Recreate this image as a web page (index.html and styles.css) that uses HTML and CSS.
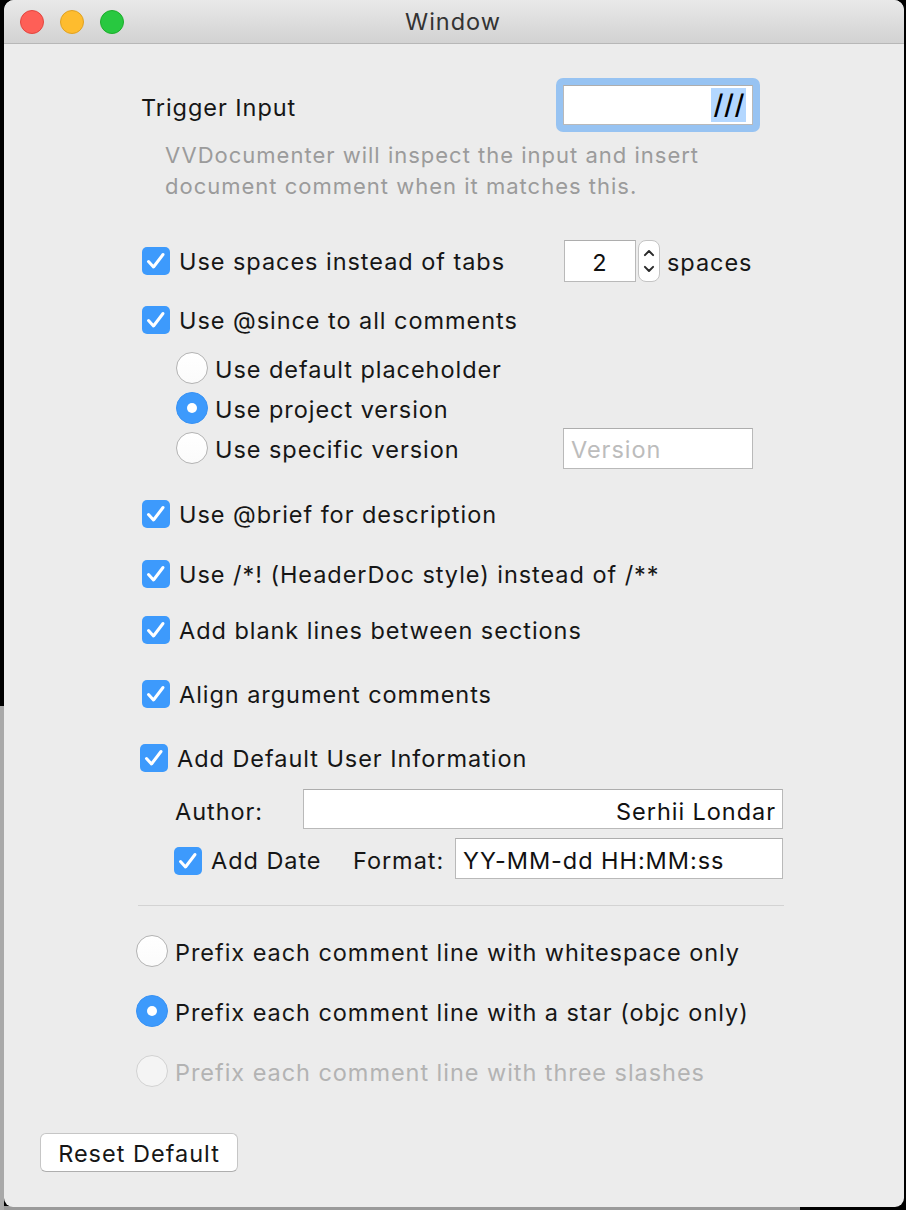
FILE: index.html
```html
<!DOCTYPE html>
<html>
<head>
<meta charset="utf-8">
<link rel="stylesheet" href="styles.css">
</head>
<body>
<div class="window">
  <div class="titlebar">
    <div class="lights">
      <span class="light red"></span>
      <span class="light yellow"></span>
      <span class="light green"></span>
    </div>
    <div class="title">Window</div>
  </div>
  <div class="content">
    <div class="form">
      <div class="row trigger-row">
        <div class="cell trigger-cell"><span class="label">Trigger Input</span></div>
        <div class="focus-ring"><div class="field trigger-field"><span class="sel">///</span></div></div>
      </div>
      <p class="desc">VVDocumenter will inspect the input and insert<br>document comment when it matches this.</p>

      <div class="row spaces-row">
        <div class="cell spaces-cell">
          <span class="check"><svg viewBox="0 0 28 28"><path d="M6.5 14.5 L11.5 20 L21 7.5"/></svg></span>
          <span class="label">Use spaces instead of tabs</span>
        </div>
        <div class="field num-field">2</div>
        <div class="stepper">
          <svg viewBox="0 0 22 42"><path d="M6.5 14.5 L11 10 L15.5 14.5"/><path d="M6.5 27.5 L11 32 L15.5 27.5"/></svg>
        </div>
        <span class="label unit">spaces</span>
      </div>

      <div class="row opt since-row">
        <span class="check"><svg viewBox="0 0 28 28"><path d="M6.5 14.5 L11.5 20 L21 7.5"/></svg></span>
        <span class="label">Use @since to all comments</span>
      </div>

      <div class="radios">
        <div class="row radio-row">
          <span class="radio"></span><span class="label">Use default placeholder</span>
        </div>
        <div class="row radio-row">
          <span class="radio on"></span><span class="label">Use project version</span>
        </div>
        <div class="row radio-row">
          <div class="cell version-cell"><span class="radio"></span><span class="label">Use specific version</span></div>
          <div class="field version-field"><span class="placeholder">Version</span></div>
        </div>
      </div>

      <div class="row opt brief-row">
        <span class="check"><svg viewBox="0 0 28 28"><path d="M6.5 14.5 L11.5 20 L21 7.5"/></svg></span>
        <span class="label">Use @brief for description</span>
      </div>
      <div class="row opt header-row">
        <span class="check"><svg viewBox="0 0 28 28"><path d="M6.5 14.5 L11.5 20 L21 7.5"/></svg></span>
        <span class="label">Use /*! (HeaderDoc style) instead of /**</span>
      </div>
      <div class="row opt blank-row">
        <span class="check"><svg viewBox="0 0 28 28"><path d="M6.5 14.5 L11.5 20 L21 7.5"/></svg></span>
        <span class="label">Add blank lines between sections</span>
      </div>
      <div class="row opt align-row">
        <span class="check"><svg viewBox="0 0 28 28"><path d="M6.5 14.5 L11.5 20 L21 7.5"/></svg></span>
        <span class="label">Align argument comments</span>
      </div>
      <div class="row opt user-row">
        <span class="check"><svg viewBox="0 0 28 28"><path d="M6.5 14.5 L11.5 20 L21 7.5"/></svg></span>
        <span class="label">Add Default User Information</span>
      </div>

      <div class="row author-row">
        <div class="cell author-cell"><span class="label">Author:</span></div>
        <div class="field author-field">Serhii Londar</div>
      </div>
      <div class="row date-row">
        <div class="cell date-cell">
          <span class="check"><svg viewBox="0 0 28 28"><path d="M6.5 14.5 L11.5 20 L21 7.5"/></svg></span>
          <span class="label">Add Date</span>
        </div>
        <div class="cell format-cell"><span class="label">Format:</span></div>
        <div class="field format-field">YY-MM-dd HH:MM:ss</div>
      </div>

      <div class="separator"></div>

      <div class="row prefix-row first">
        <span class="radio"></span><span class="label">Prefix each comment line with whitespace only</span>
      </div>
      <div class="row prefix-row">
        <span class="radio on"></span><span class="label">Prefix each comment line with a star (objc only)</span>
      </div>
      <div class="row prefix-row">
        <span class="radio disabled"></span><span class="label dim">Prefix each comment line with three slashes</span>
      </div>
    </div>
    <button class="btn">Reset Default</button>
  </div>
</div>
</body>
</html>
```

FILE: styles.css
```css
* { box-sizing: border-box; }
html, body { margin: 0; padding: 0; }
body {
  width: 906px;
  height: 1210px;
  overflow: hidden;
  background:
    linear-gradient(#a9a9a9, #a9a9a9) 0 706px / 4px 504px no-repeat,
    linear-gradient(#9a9a9a, #9a9a9a) 0 1206px / 800px 4px no-repeat,
    #000;
  font-family: "Inter", "Liberation Sans", sans-serif;
  color: #161616;
}
.window {
  margin-left: 4px;
  width: 900px;
  height: 1207px;
  background: #ececec;
  border-radius: 10px 10px 9px 9px;
  overflow: hidden;
}
.titlebar {
  position: relative;
  height: 44px;
  background: linear-gradient(to bottom, #e9e9e9, #d2d2d2);
  border-bottom: 1px solid #b7b7b7;
  display: flex;
  align-items: center;
  justify-content: center;
}
.lights {
  position: absolute;
  left: 16px;
  top: 10px;
  display: flex;
  gap: 16px;
}
.light {
  width: 24px;
  height: 24px;
  border-radius: 50%;
  display: block;
}
.red { background: #fe5f57; border: 1px solid #e2463f; }
.yellow { background: #febc2e; border: 1px solid #dfa123; }
.green { background: #28c840; border: 1px solid #1dad2b; }
.title {
  font-size: 23.5px;
  color: #333;
  letter-spacing: 1px;
  padding-right: 2px;
}
.content {
  padding-top: 34px;
}
.form {
  margin-left: 132px;
  width: 648px;
}
.row {
  display: flex;
  align-items: center;
}
.cell { display: flex; align-items: center; flex: none; }
.label {
  font-size: 23.5px;
  letter-spacing: 0.95px;
  white-space: nowrap;
}
.trigger-row { height: 54px; }
.trigger-cell { width: 420px; padding-left: 5px; padding-top: 4px; }
.focus-ring {
  width: 204px;
  height: 54px;
  border-radius: 7px;
  background: #97c3f2;
  padding: 7px;
}
.field {
  background: #fff;
  border: 1px solid #b9b9b9;
  border-top-color: #adadad;
  font-size: 23.5px;
  letter-spacing: 0.95px;
  color: #111;
  display: flex;
  align-items: center;
}
.trigger-field {
  height: 40px;
  justify-content: flex-end;
  padding-right: 6px;
}
.sel {
  background: #b3d7ff;
  height: 34px;
  line-height: 34px;
  padding: 0 1px 0 3px;
  font-size: 27px;
  font-weight: 500;
  color: #000;
  letter-spacing: 0.5px;
}
.desc {
  margin: 8px 0 0 29px;
  font-size: 22px;
  line-height: 31px;
  letter-spacing: 1px;
  color: #9b9b9b;
}
.check {
  width: 28px;
  height: 28px;
  border-radius: 5px;
  background: #3d9afc;
  flex: none;
  display: block;
}
.check svg { width: 28px; height: 28px; display: block; }
.check path { fill: none; stroke: #fff; stroke-width: 3; stroke-linecap: round; stroke-linejoin: round; }
.check + .label { margin-left: 9px; }
.spaces-row { margin-top: 38px; height: 42px; }
.spaces-cell { width: 428px; padding-left: 6px; }
.num-field {
  width: 72px;
  height: 42px;
  justify-content: center;
  padding-top: 3px;
}
.stepper {
  width: 22px;
  height: 42px;
  margin-left: 2px;
  background: #fff;
  border: 1px solid #c4c4c4;
  border-radius: 8px;
  flex: none;
}
.stepper svg { width: 20px; height: 40px; display: block; }
.stepper path { fill: none; stroke: #2a2a2a; stroke-width: 2.2; stroke-linecap: round; stroke-linejoin: round; }
.unit { margin-left: 7px; padding-top: 3px; }
.opt { height: 30px; padding-left: 6px; }
.since-row { margin-top: 23px; }
.radios { margin-top: 13px; padding-left: 40px; }
.radio-row { height: 40px; }
.radio {
  width: 32px;
  height: 32px;
  border-radius: 50%;
  background: linear-gradient(#fff, #fbfbfb);
  border: 1px solid #b3b3b3;
  flex: none;
  display: block;
  position: relative;
}
.radio.on {
  background: #3d9afc;
  border-color: #3892f4;
}
.radio.on::after {
  content: "";
  position: absolute;
  left: 10px;
  top: 10px;
  width: 10px;
  height: 10px;
  border-radius: 50%;
  background: #fff;
}
.radio.disabled {
  background: #f4f4f4;
  border-color: #d2d2d2;
}
.radio + .label { margin-left: 7px; }
.version-cell { width: 387px; }
.version-field {
  width: 190px;
  height: 41px;
  padding-left: 7px;
  padding-top: 3px;
}
.placeholder { color: #bcbcbc; }
.brief-row { margin-top: 31px; }
.header-row { margin-top: 30px; }
.blank-row { margin-top: 26px; }
.align-row { margin-top: 34px; }
.user-row { margin-top: 34px; padding-left: 4px; }
.author-row { margin-top: 16px; height: 40px; }
.author-cell { width: 167px; padding-left: 39px; padding-top: 4px; }
.author-field {
  width: 480px;
  height: 40px;
  justify-content: flex-end;
  padding-right: 6px;
  padding-top: 4px;
}
.date-row { margin-top: 9px; height: 41px; }
.date-cell { width: 217px; padding-left: 38px; padding-top: 4px; }
.format-cell { width: 102px; padding-top: 4px; }
.format-field {
  width: 328px;
  height: 41px;
  padding-left: 7px;
  padding-top: 3px;
}
.separator {
  margin: 26px 0 0 2px;
  width: 646px;
  height: 1px;
  background: #d3d3d3;
}
.prefix-row { height: 40px; margin-top: 20px; }
.prefix-row.first { margin-top: 25px; }
.prefix-row .label { padding-top: 3px; }
.radio-row .label { padding-top: 2px; }
.dim { color: #b3b3b3; }
.btn {
  display: block;
  margin: 42px 0 0 36px;
  width: 198px;
  height: 39px;
  background: #fff;
  border: 1px solid #c6c6c6;
  border-bottom-color: #aeaeae;
  border-radius: 6px;
  font-family: "Inter", "Liberation Sans", sans-serif;
  font-size: 23.5px;
  letter-spacing: 1px;
  color: #161616;
  padding: 2px 0 0;
}
```
